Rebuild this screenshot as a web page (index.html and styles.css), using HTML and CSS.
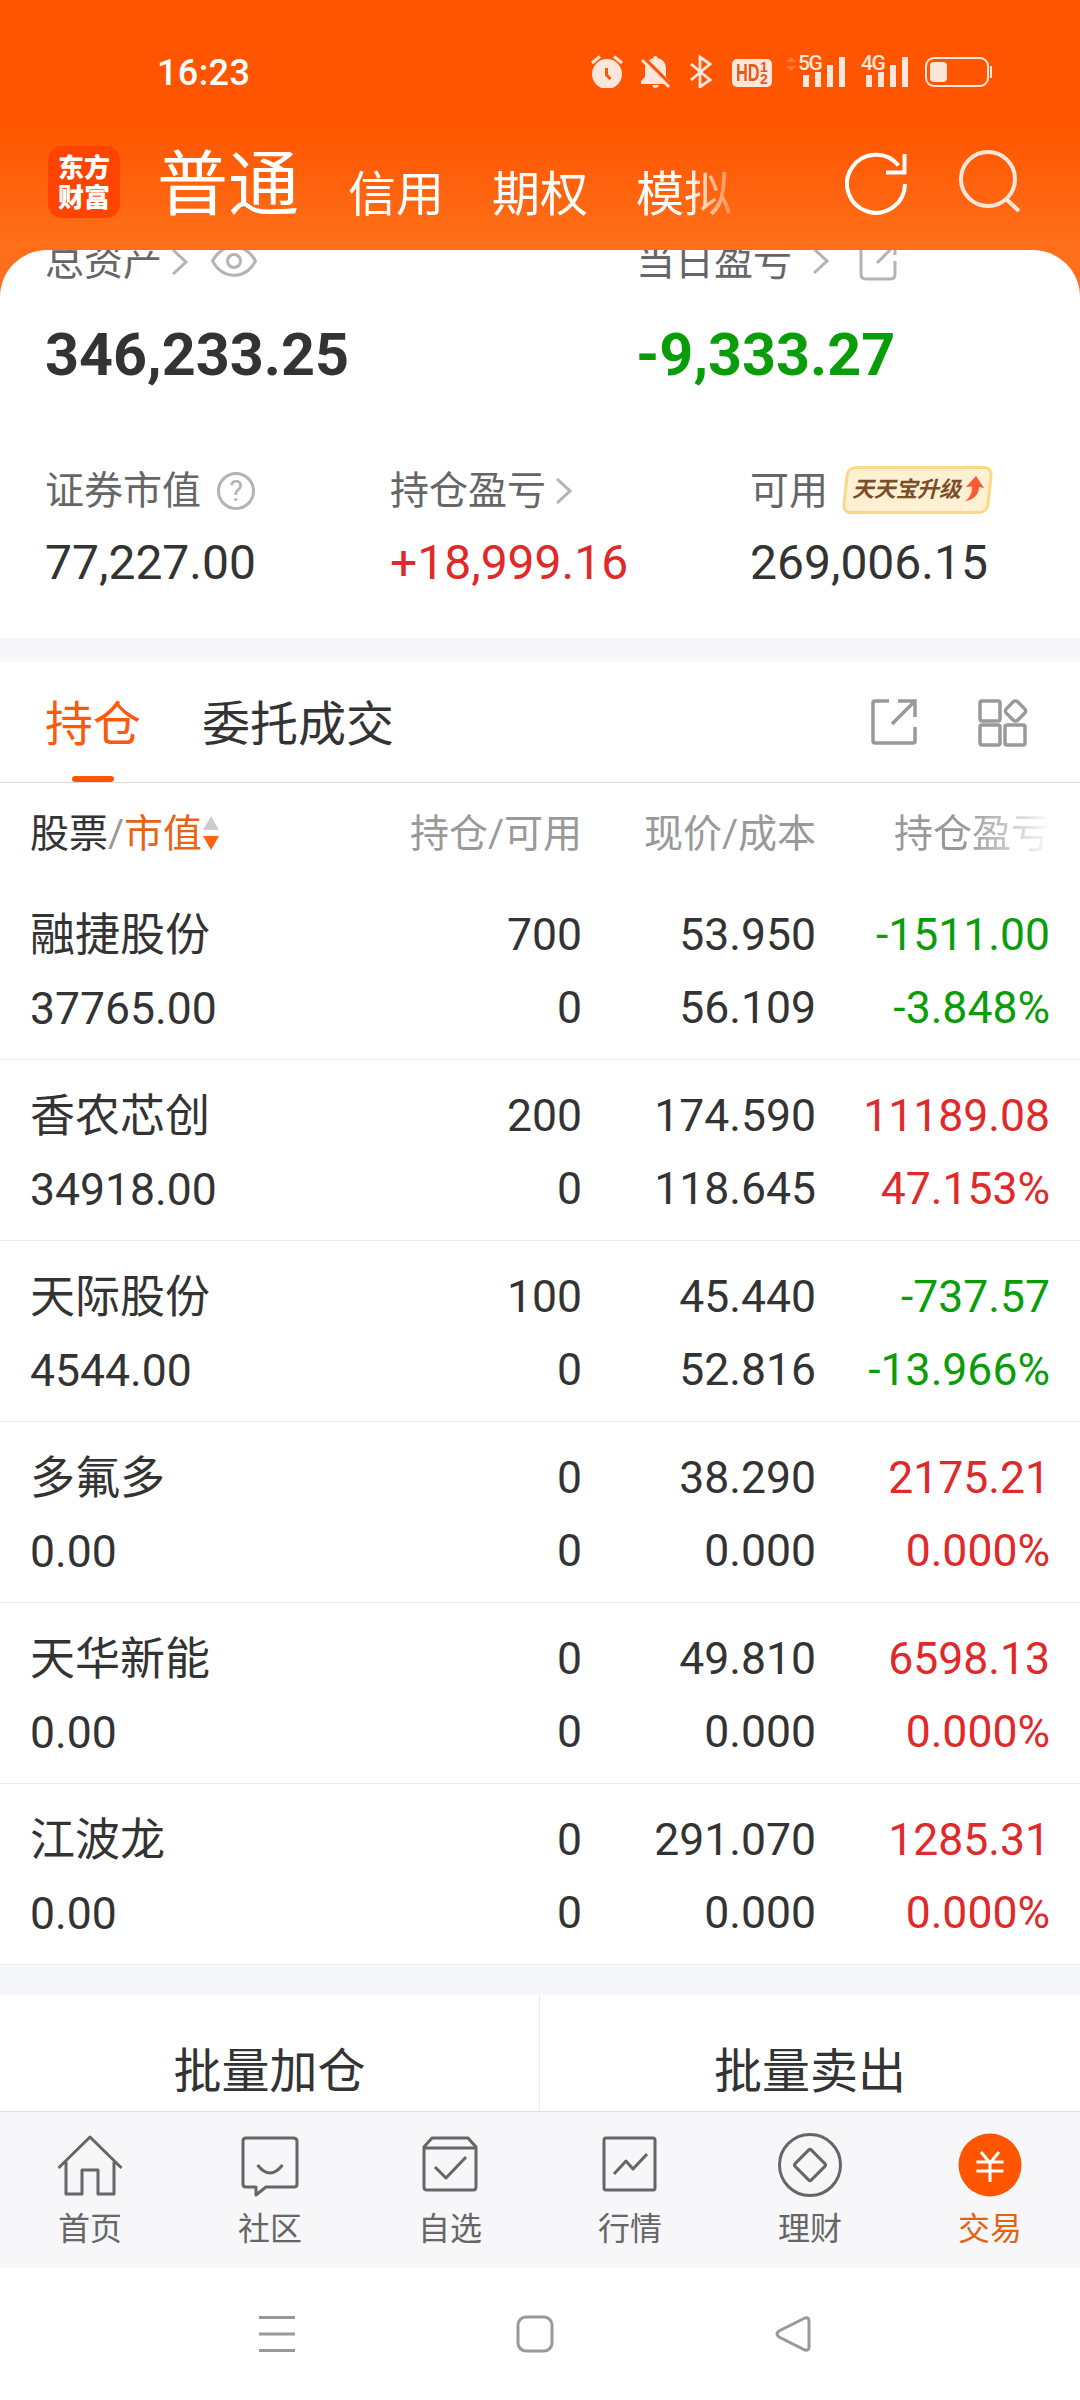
FILE: index.html
```html
<!DOCTYPE html>
<html lang="zh-CN">
<head>
    <meta charset="UTF-8">
    <meta name="viewport" content="width=device-width, initial-scale=1.0">
    <title>交易</title>
    <link rel="stylesheet" href="styles.css">
</head>
<body>
    <div class="status-bar">
        <span class="clock">16:23</span>
        <div class="status-icons">
            <!-- alarm -->
            <svg class="alarm" width="32" height="34" viewBox="0 0 32 34">
                <circle cx="16" cy="20" r="15" fill="currentColor"/>
                <path d="M1 9L9 2.500M31 9L23 2.500" stroke="currentColor" stroke-width="3" fill="none"/>
                <path d="M15.500 14v7l4 4" stroke="#ff5500" stroke-width="3" fill="none"/>
            </svg>
            <!-- muted bell -->
            <svg class="bell" width="32" height="34" viewBox="0 0 32 34">
                <path d="M1 30v-3l4-4v-8C5 9 9 5 13 4.500C13 1 18 1 18 4.500C23 5 26 9 26 15v8l4 4v3zM12 31h7c-1 4-6 4-7 0z" fill="currentColor"/>
                <path d="M5 5l27 27" stroke="#ff5500" stroke-width="3.500"/>
                <path d="M2 6l27 27" stroke="currentColor" stroke-width="3"/>
            </svg>
            <svg class="bluetooth" width="22" height="34" viewBox="0 0 22 34">
                <path d="M1 10l19 16l-10 7V3l10 7L1 26" stroke="currentColor" stroke-width="2.800" fill="none"/>
            </svg>
            <div class="hd">
                <span class="hd-text">HD</span>
                <div class="hd-sim"><span>1</span><span>2</span></div>
            </div>
            <svg class="traffic" width="10" height="16" viewBox="0 0 10 16">
                <path d="M0 6l5-5l5 5zM0 10l5 5l5-5z" fill="currentColor"/>
            </svg>
            <div class="signal">
                <span class="net">5G</span>
                <svg width="44" height="34" viewBox="0 0 44 34">
                    <path d="M1 20h6v12H1zM13 17h6v15h-6zM25 10h6v22h-6zM37 2h6v30h-6z" fill="currentColor"/>
                </svg>
            </div>
            <div class="signal">
                <span class="net">4G</span>
                <svg width="44" height="34" viewBox="0 0 44 34">
                    <path d="M1 20h6v12H1zM13 17h6v15h-6zM25 10h6v22h-6zM37 2h6v30h-6z" fill="currentColor"/>
                </svg>
            </div>
            <svg class="battery" width="68" height="32" viewBox="0 0 68 32">
                <rect x="1" y="2" width="62" height="28" rx="8" fill="none" stroke="currentColor" stroke-width="2"/>
                <rect x="5" y="6" width="17" height="20" rx="4" fill="currentColor"/>
                <path d="M66 10v12" stroke="currentColor" stroke-width="2"/>
            </svg>
        </div>
    </div>

    <div class="header">
        <div class="logo">
            <div>东方</div>
            <div>财富</div>
        </div>
        <div class="accounts">
            <span class="account active">普通</span>
            <span class="account">信用</span>
            <span class="account">期权</span>
            <span class="account">模拟</span>
        </div>
        <svg class="refresh" width="64" height="64" viewBox="0 0 64 64">
            <path d="M60 33A29 29 0 1 1 53.500 14.500" fill="none" stroke="#fff" stroke-width="4"/>
            <path d="M41 21.500h18.500V3" fill="none" stroke="#fff" stroke-width="4"/>
        </svg>
        <svg class="search" width="64" height="64" viewBox="0 0 64 64">
            <circle cx="30" cy="30" r="27" fill="none" stroke="currentColor" stroke-width="4"/>
            <path d="M48 50l13 12" stroke="currentColor" stroke-width="4"/>
        </svg>
    </div>

    <div class="summary">
        <div class="totals">
            <div>
                <div class="label">总资产
                    <svg class="total-arrow" width="16" height="26" viewBox="0 0 16 26"><path d="M1 1l13 12L1 25" class="line"/></svg>
                    <svg class="eye" width="46" height="32" viewBox="0 0 46 32">
                        <path d="M1.500 16C12-3 34-3 44.500 16C34 35 12 35 1.500 16z" class="line"/>
                        <circle cx="23" cy="16" r="6.500" class="line"/>
                    </svg>
                </div>
                <div class="total">346,233.25</div>
            </div>
            <div>
                <div class="label">当日盈亏
                    <svg class="day-arrow" width="16" height="26" viewBox="0 0 16 26"><path d="M1 1l13 12L1 25" class="line"/></svg>
                    <svg class="day-share" width="38" height="38" viewBox="0 0 38 38">
                        <path d="M14 2H7q-5 0-5 5v24q0 5 5 5h24q5 0 5-5V18M24 2h12v10M35 3L18 20" class="line"/>
                    </svg>
                </div>
                <div class="total green">-9,333.27</div>
            </div>
        </div>
        <div class="details">
            <div>
                <div class="label">证券市值<span class="help">?</span></div>
                <div class="value">77,227.00</div>
            </div>
            <div>
                <div class="label">持仓盈亏
                    <svg class="hold-arrow" width="16" height="26" viewBox="0 0 16 26"><path d="M1 1l13 12L1 25" class="line"/></svg>
                </div>
                <div class="value red">+18,999.16</div>
            </div>
            <div>
                <div class="label">可用
                    <span class="badge"><span>天天宝升级</span>
                        <svg width="19" height="26" viewBox="0 0 19 26"><path d="M11 0l8 12l-5-1C14 18 9 24 0 25C6 21 7 16 7 10.500L1 11z" fill="#fb5a32"/></svg>
                    </span>
                </div>
                <div class="value">269,006.15</div>
            </div>
        </div>
    </div>

    <div class="tabs">
        <span class="tab active">持仓</span>
        <span class="tab">委托成交</span>
        <svg class="tab-share" width="48" height="48" viewBox="0 0 48 48">
            <path d="M19 3H5q-2 0-2 2v38q0 2 2 2h38q2 0 2-2V29M28 3h17v16M44 4L22 26"/>
        </svg>
        <svg class="tab-grid" width="50" height="50" viewBox="0 0 50 50">
            <rect x="2" y="3" width="20" height="20" rx="2"/>
            <rect x="2" y="27" width="20" height="20" rx="2"/>
            <rect x="27" y="27" width="20" height="20" rx="2"/>
            <rect x="29.500" y="5" width="16" height="16" rx="3" transform="rotate(45 37.500 13)"/>
        </svg>
    </div>

    <div class="holdings-head">
        <div class="sort">股票<span class="slash">/</span><span class="sorted">市值</span>
            <svg width="16" height="36" viewBox="0 0 16 36">
                <path d="M0 15L8 1l8 14z" fill="#ccc"/>
                <path d="M0 21h16L8 35z" fill="#fa6414"/>
            </svg>
        </div>
        <div>持仓/可用</div>
        <div>现价/成本</div>
        <div class="fade">持仓盈亏</div>
    </div>

    <div class="holding">
        <div><span class="name">融捷股份</span><br>37765.00</div>
        <div>700<br>0</div>
        <div>53.950<br>56.109</div>
        <div class="green">-1511.00<br>-3.848%</div>
    </div>
    <div class="holding">
        <div><span class="name">香农芯创</span><br>34918.00</div>
        <div>200<br>0</div>
        <div>174.590<br>118.645</div>
        <div class="red">11189.08<br>47.153%</div>
    </div>
    <div class="holding">
        <div><span class="name">天际股份</span><br>4544.00</div>
        <div>100<br>0</div>
        <div>45.440<br>52.816</div>
        <div class="green">-737.57<br>-13.966%</div>
    </div>
    <div class="holding">
        <div><span class="name">多氟多</span><br>0.00</div>
        <div>0<br>0</div>
        <div>38.290<br>0.000</div>
        <div class="red">2175.21<br>0.000%</div>
    </div>
    <div class="holding">
        <div><span class="name">天华新能</span><br>0.00</div>
        <div>0<br>0</div>
        <div>49.810<br>0.000</div>
        <div class="red">6598.13<br>0.000%</div>
    </div>
    <div class="holding">
        <div><span class="name">江波龙</span><br>0.00</div>
        <div>0<br>0</div>
        <div>291.070<br>0.000</div>
        <div class="red">1285.31<br>0.000%</div>
    </div>

    <div class="batch">
        <div>批量加仓</div>
        <div>批量卖出</div>
    </div>

    <div class="nav">
        <div class="nav-item">
            <svg width="66" height="66" viewBox="0 0 66 66">
                <path d="M1.500 36L33 5l31.500 31M9 30v32h16V38h16v24h16V30"/>
            </svg>
            首页
        </div>
        <div class="nav-item">
            <svg width="66" height="66" viewBox="0 0 66 66">
                <path d="M8 6h48q4 0 4 3v43q0 3-3 3H29l-10 8v-8H9q-3 0-3-3V9q0-3 3-3M20.500 33q12.500 16 25 0"/>
            </svg>
            社区
        </div>
        <div class="nav-item">
            <svg width="66" height="66" viewBox="0 0 66 66">
                <path d="M7 15v40q0 3 3 3h46q3 0 3-3V15l-8-9H15zM7 16h52M18 35l11 11l20-21"/>
            </svg>
            自选
        </div>
        <div class="nav-item">
            <svg width="66" height="66" viewBox="0 0 66 66">
                <rect x="7" y="6" width="51" height="52" rx="2"/>
                <path d="M17 42l12-13l7 8l14-15"/>
            </svg>
            行情
        </div>
        <div class="nav-item">
            <svg width="66" height="66" viewBox="0 0 66 66">
                <circle cx="33" cy="33" r="30.500"/>
                <rect x="21.500" y="21.500" width="23" height="23" rx="2" transform="rotate(45 33 33)"/>
            </svg>
            理财
        </div>
        <div class="nav-item active">
            <svg width="66" height="66" viewBox="0 0 66 66">
                <circle cx="33" cy="33" r="31.500" class="coin"/>
                <path class="yen" d="M24 20l9 11l9-11M19.500 30h27M19.500 39h27M33 30v20"/>
            </svg>
            交易
        </div>
    </div>

    <div class="system-nav">
        <svg width="36" height="38" viewBox="0 0 36 38"><path d="M0 2.500h36M0 19h36M0 35.500h36"/></svg>
        <svg width="38" height="38" viewBox="0 0 38 38"><rect x="2" y="2" width="34" height="34" rx="8"/></svg>
        <svg width="36" height="38" viewBox="0 0 36 38"><path d="M30 3L4 16q-4 3 0 6l26 13q4 1 4-3V6q0-4-4-3z"/></svg>
    </div>
</body>
</html>
```
FILE: styles.css
```css
* {
    box-sizing: border-box;
}
body {
    margin: 0;
    width: 1080px;
    height: 2400px;
    overflow: hidden;
    font-family: Roboto, "Noto Sans CJK SC", sans-serif;
    color: #333;
    background: #fff linear-gradient(#ff5500 0, #ff5500 125px, #ff6d18 235px, #ff7020 300px) no-repeat;
    background-size: 100% 300px;
}
svg {
    display: block;
    flex: none;
}
.red {
    color: #e02a2a;
}
.green {
    color: #0a9d0a;
}

/* Phone status bar */
.status-bar {
    height: 130px;
    padding: 54px 87px 0 157px;
    display: flex;
    justify-content: space-between;
    color: #fff;
}
.clock {
    font-size: 36px;
    font-weight: 500;
    line-height: 39px;
    letter-spacing: 0.400px;
}
.status-icons {
    display: flex;
    height: 36px;
    color: #ffe6da;
}
.alarm {
    margin-right: 17px;
}
.bell {
    margin-right: 18px;
}
.bluetooth {
    margin-right: 20px;
}
.hd {
    display: flex;
    width: 40px;
    height: 28px;
    margin: 5px 14px 0 0;
    padding-left: 4px;
    border-radius: 5px;
    background: #ffe6da;
    color: #e8581a;
    font-family: "Liberation Sans", sans-serif;
    font-weight: bold;
}
.hd-text {
    width: 24px;
    font-size: 24px;
    line-height: 28px;
    transform: scaleX(0.680);
    transform-origin: left center;
}
.hd-sim {
    display: flex;
    flex-direction: column;
    padding-top: 2px;
    font-size: 14px;
    line-height: 12px;
}
.traffic {
    margin: 2px 6px 0 0;
    color: #ff7a3c;
}
.signal {
    position: relative;
    margin-right: 19px;
}
.signal + .signal {
    margin-right: 16px;
}
.signal svg {
    margin-top: 1px;
}
.net {
    position: absolute;
    left: -4px;
    top: 0;
    font-size: 21px;
    font-weight: 500;
    line-height: 18px;
    letter-spacing: -1.500px;
    background: #ff5500;
}
.battery {
    margin-top: 2px;
}

/* Header */
.header {
    height: 120px;
    padding-left: 48px;
    display: flex;
    color: #fff;
}
.logo {
    width: 72px;
    height: 72px;
    margin: 16px 37px 0 0;
    padding-top: 5px;
    border-radius: 14px;
    background: #ff4300;
    font-family: "Noto Sans CJK SC", sans-serif;
    font-size: 26px;
    font-weight: 900;
    line-height: 30px;
    text-align: center;
}
.accounts {
    width: 587px;
    display: flex;
    align-items: baseline;
    line-height: 110px;
    font-size: 48px;
    -webkit-mask-image: linear-gradient(90deg, #000 530px, transparent 590px);
    mask-image: linear-gradient(90deg, #000 530px, transparent 590px);
}
.account {
    position: relative;
    top: 2px;
    left: 1px;
    margin-right: 48px;
    white-space: nowrap;
}
.account.active {
    top: 0;
    left: 0;
    font-size: 71px;
}
.refresh {
    margin: 21px 49px 0 101px;
}
.search {
    margin-top: 19px;
    color: #ffe6da;
}

/* Assets */
.summary {
    height: 388px;
    overflow: hidden;
    padding-left: 45px;
    border-radius: 47px 47px 0 0;
    background: #fff;
}
.totals {
    display: grid;
    grid-template-columns: 591px 1fr;
    margin-top: -18px;
}
.details {
    display: grid;
    grid-template-columns: 345px 360px 1fr;
    margin-top: 75px;
}
.label {
    display: flex;
    align-items: center;
    height: 60px;
    font-size: 39px;
    line-height: 60px;
    color: #666;
}
.line {
    fill: none;
    stroke: #b4b4b4;
    stroke-width: 3;
}
.total-arrow {
    margin: 0 23px 0 10px;
}
.eye {
    margin-top: -2px;
}
.day-arrow {
    margin: -2px 30px 0 21px;
}
.hold-arrow {
    margin-left: 10px;
}
.total {
    margin-top: 33px;
    padding-bottom: 1px;
    font-size: 59.300px;
    font-weight: bold;
    line-height: 60px;
}
.value {
    margin-top: 12px;
    font-size: 48px;
    line-height: 60px;
}
.help {
    width: 38px;
    height: 38px;
    margin-left: 16px;
    border: 3px solid #b4b4b4;
    border-radius: 50%;
    font-size: 29px;
    line-height: 33px;
    text-align: center;
    color: #b4b4b4;
}
.badge {
    position: relative;
    z-index: 0;
    display: flex;
    align-items: center;
    width: 147px;
    height: 48px;
    margin: -2px 0 0 16px;
    padding-left: 8px;
}
.badge::before {
    content: "";
    position: absolute;
    z-index: -1;
    inset: 0;
    border: 3px solid #f8d987;
    border-radius: 9px;
    background: #fff0d2;
    transform: skewX(-6deg);
}
.badge span {
    font-size: 22px;
    font-weight: 700;
    font-style: italic;
    letter-spacing: -0.300px;
    line-height: 50px;
    color: #7a4e2a;
    white-space: nowrap;
}
.badge svg {
    margin-left: 4px;
    margin-top: -2px;
}

/* Tabs */
.tabs {
    display: flex;
    height: 145px;
    padding-left: 45px;
    border-top: 24px solid #f7f7fa;
    border-bottom: 1px solid #ddd;
    font-size: 48px;
    line-height: 125px;
}
.tab {
    height: 120px;
    margin-right: 61px;
}
.tab.active {
    position: relative;
    color: #fa5a0a;
}
.tab.active::after {
    content: "";
    position: absolute;
    left: 27px;
    bottom: 0;
    width: 42px;
    height: 6px;
    border-radius: 3px;
    background: #ff5500;
}
.tabs svg {
    fill: none;
    stroke: #999;
    stroke-width: 3.500;
}
.tab-share {
    margin: 36px 60px 0 415px;
}
.tab-grid {
    margin-top: 36px;
}

/* Holdings table */
.holdings-head,
.holding {
    display: grid;
    grid-template-columns: 300px 252px 234px 234px;
    padding: 0 30px;
    text-align: right;
}
.holdings-head > :first-child,
.holding > :first-child {
    text-align: left;
}
.holdings-head {
    height: 96px;
    line-height: 102px;
    font-size: 39px;
    color: #999;
}
.sort {
    display: flex;
    align-items: center;
    height: 102px;
    color: #333;
}
.sort svg {
    margin: -2px 0 0 1px;
}
.slash {
    color: #999;
}
.sorted {
    color: #e66414;
}
.fade {
    -webkit-mask-image: linear-gradient(90deg, #000 150px, transparent 238px);
    mask-image: linear-gradient(90deg, #000 150px, transparent 238px);
}
.holding {
    height: 181px;
    padding-top: 20px;
    border-bottom: 1px solid #ebebeb;
    font-size: 44.500px;
    line-height: 73px;
}
.name {
    font-size: 45px;
}

/* Batch buttons */
.batch {
    display: grid;
    grid-template-columns: 540px 540px;
    height: 146px;
    overflow: hidden;
    border-top: 30px solid #f6f7fa;
    font-size: 48px;
    line-height: 154px;
    text-align: center;
}
.batch > :first-child {
    border-right: 1px solid #ebebeb;
}

/* Bottom navigation */
.nav {
    display: flex;
    height: 157px;
    border-top: 1px solid #ddd;
    background: #f7f7fa;
}
.nav-item {
    display: flex;
    flex-direction: column;
    align-items: center;
    width: 180px;
    padding-top: 20px;
    font-size: 32px;
    line-height: 63px;
    color: #666;
}
.nav-item svg {
    fill: none;
    stroke: #666;
    stroke-width: 3;
    stroke-linejoin: round;
}
.nav-item.active {
    color: #e06414;
}
.nav-item .coin {
    fill: #ff5500;
    stroke: none;
}
.nav-item .yen {
    stroke: #fff;
}
.system-nav {
    display: flex;
    justify-content: space-between;
    padding: 47px 269px 0 259px;
}
.system-nav svg {
    fill: none;
    stroke: #999;
    stroke-width: 3;
}
```
